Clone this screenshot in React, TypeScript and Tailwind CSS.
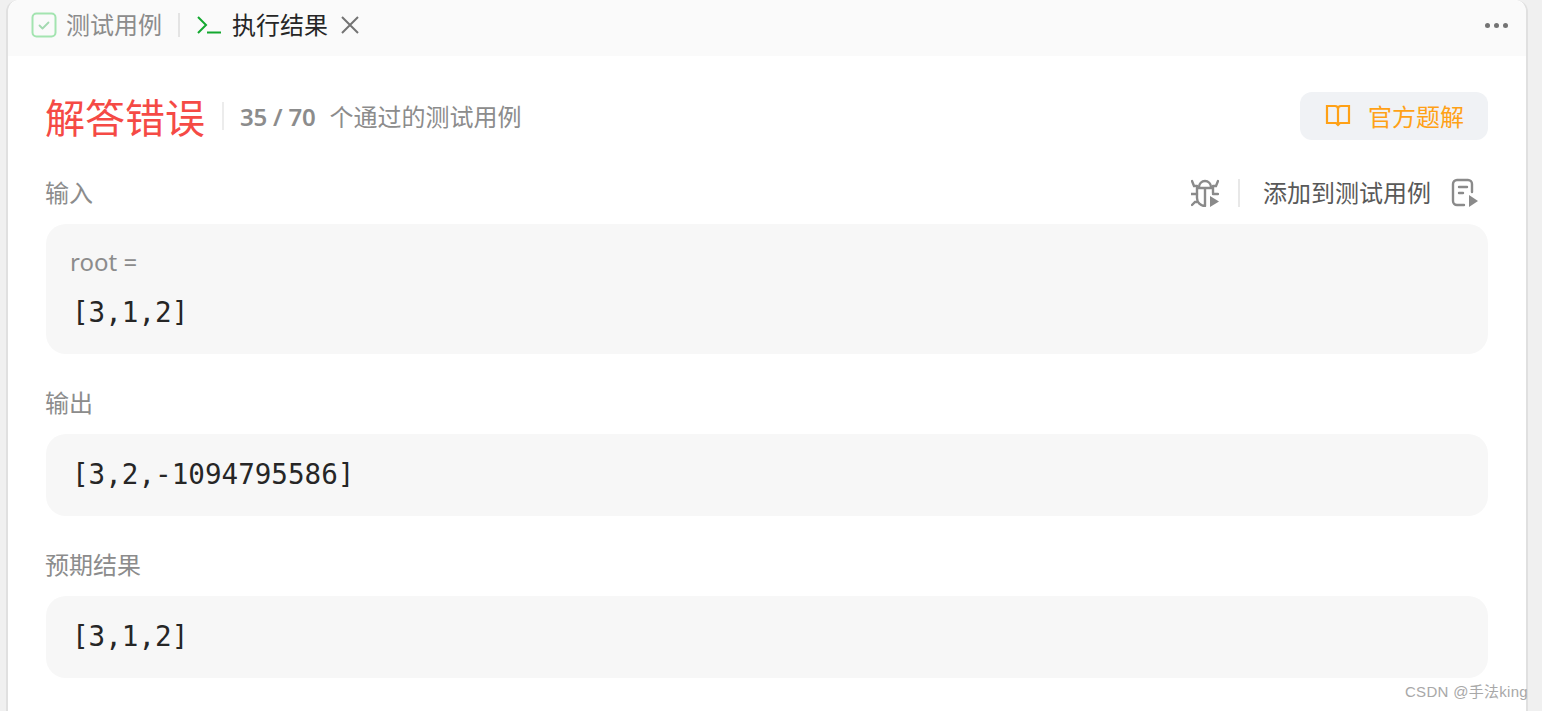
const cjk = '[font-family:"Noto_Sans","Noto_Sans_CJK_SC",sans-serif]';

const CheckBoxIcon = () => (
  <svg width="26" height="26" viewBox="0 0 26 26" fill="none">
    <rect x="1.500" y="1.500" width="23" height="23" rx="4" stroke="#a3e4b0" strokeWidth="2" />
    <path d="M8.500 13.500l3 3 6-6" stroke="#a3d9b0" strokeWidth="1.800" strokeLinecap="round" strokeLinejoin="round" />
  </svg>
);

const TerminalIcon = () => (
  <svg width="26" height="20" viewBox="0 0 26 20" fill="none">
    <path d="M2 2l8 8-8 8" stroke="#13a82f" strokeWidth="2" strokeLinejoin="miter" />
    <path d="M11 17.500h14" stroke="#13a82f" strokeWidth="2" />
  </svg>
);

const BookIcon = () => (
  <svg width="26" height="24" viewBox="0 0 26 24" fill="none" stroke="#ffa116" strokeWidth="2.200">
    <path d="M2 2h8c2 0 3 1 3 3 0-2 1-3 3-3h8v17h-9l-2 2-2-2H2z" strokeLinejoin="miter" />
    <path d="M13 5v15" />
  </svg>
);

const BugPlayIcon = () => (
  <svg width="28" height="28" viewBox="0 0 28 28" fill="none" stroke="#8a8a8a" strokeWidth="2.400" strokeLinecap="round">
    <path d="M1 2l2 5h3M27 2l-2 5h-3M0.500 15h5.500M1 26l3-3h2M22 15h5" />
    <path d="M8 8a6 6 0 0 1 12 0" />
    <path d="M6 9h16v5M6 9v10a8 8 0 0 0 8 8M14 9v18" />
    <path d="M19 17l9 5.500-9 5.500z" fill="#8a8a8a" stroke="none" />
  </svg>
);

const NotePlayIcon = () => (
  <svg width="28" height="30" viewBox="0 0 28 30" fill="none" stroke="#8a8a8a" strokeWidth="2.400" strokeLinecap="round">
    <path d="M13 27H6a4 4 0 0 1-4-4V6a4 4 0 0 1 4-4h11a4 4 0 0 1 4 4v8" />
    <path d="M8 9h8M8 15h4" />
    <path d="M18 17l9 6-9 6z" fill="#8a8a8a" stroke="none" />
  </svg>
);

const CodeBlock = ({ value }: { value: string }) => (
  <div className="flex h-[82px] items-center rounded-[20px] bg-[#f7f7f7] pl-[26px]">
    <span className="font-['DejaVu_Sans_Mono',monospace] text-[27.6px] leading-none text-[#262626]">{value}</span>
  </div>
);

export default function App() {
  return (
    <div className={`h-[711px] w-[1542px] overflow-hidden bg-[#f0f0f0] pl-[6px] pr-[14px] ${cjk}`}>
      <div className="relative h-[711px] rounded-t-xl border-x-2 border-[#e0e0e0] bg-white">
        {/* tab bar */}
        <div className="flex h-[56px] items-center rounded-t-xl bg-[#fafafa] pb-[6px] pl-[23px] pr-[18px]">
          <CheckBoxIcon />
          <span className="ml-[9px] text-2xl text-[#8c8c8c]">测试用例</span>
          <div className="mx-4 h-6 w-[2px] bg-[#e4e4e4]" />
          <TerminalIcon />
          <span className="ml-[10px] text-2xl text-[#262626]">执行结果</span>
          <svg className="ml-[12px]" width="20" height="20" viewBox="0 0 20 20" stroke="#737373" strokeWidth="2">
            <path d="M2 2l16 16M18 2L2 18" />
          </svg>
          <div className="ml-auto flex gap-[4px]">
            <div className="h-[5px] w-[5px] rounded-full bg-[#737373]" />
            <div className="h-[5px] w-[5px] rounded-full bg-[#737373]" />
            <div className="h-[5px] w-[5px] rounded-full bg-[#737373]" />
          </div>
        </div>

        <div className="px-[38px]">
          {/* result header */}
          <div className="mt-9 flex h-12 items-center">
            <span className="-ml-px pt-1 text-[40px] leading-none text-[#f54a45]">解答错误</span>
            <div className="ml-[17px] h-7 w-[2px] bg-[#ececec]" />
            <span className="ml-4 pt-[2px] text-2xl font-semibold tracking-[-0.2px] text-[#8c8c8c]">35 / 70</span>
            <span className="ml-[14px] pt-[2px] text-2xl text-[#8c8c8c]">个通过的测试用例</span>
            <div className="ml-auto flex h-12 w-[188px] items-center rounded-xl bg-[#f0f2f5] pl-[25px]">
              <BookIcon />
              <span className="ml-[17px] pt-[2px] text-2xl text-[#ffa116]">官方题解</span>
            </div>
          </div>

          {/* input */}
          <div className="mt-[33px] flex h-10 items-center justify-between">
            <span className="-ml-px text-2xl text-[#8c8c8c]">输入</span>
            <div className="flex items-center pr-[9px]">
              <BugPlayIcon />
              <div className="ml-[19px] h-7 w-[2px] bg-[#e8e8e8]" />
              <span className="ml-[23px] text-2xl text-[#595959]">添加到测试用例</span>
              <div className="ml-5"><NotePlayIcon /></div>
            </div>
          </div>
          <div className="mt-[11px] h-[130px] rounded-[20px] bg-[#f7f7f7] pl-6 pt-[19px]">
            <div className="text-2xl leading-[38px] text-[#8c8c8c]">root =</div>
            <div className="mt-[15px] pl-[2px] font-['DejaVu_Sans_Mono',monospace] text-[27.6px] leading-[34px] text-[#262626]">[3,1,2]</div>
          </div>

          {/* output */}
          <div className="mt-[29px] flex h-10 items-center">
            <span className="-ml-px text-2xl text-[#8c8c8c]">输出</span>
          </div>
          <div className="mt-[11px]">
            <CodeBlock value="[3,2,-1094795586]" />
          </div>

          {/* expected */}
          <div className="mt-[29px] flex h-10 items-center">
            <span className="-ml-px text-2xl text-[#8c8c8c]">预期结果</span>
          </div>
          <div className="mt-[11px]">
            <CodeBlock value="[3,1,2]" />
          </div>
        </div>

        {/* watermark */}
        <div className="absolute right-[-2px] top-[682px] font-['Liberation_Sans','Noto_Sans_CJK_SC',sans-serif] text-[15px] leading-5 tracking-[0.3px] text-[#a8a8a8]">CSDN @手法king</div>
      </div>
    </div>
  );
}
